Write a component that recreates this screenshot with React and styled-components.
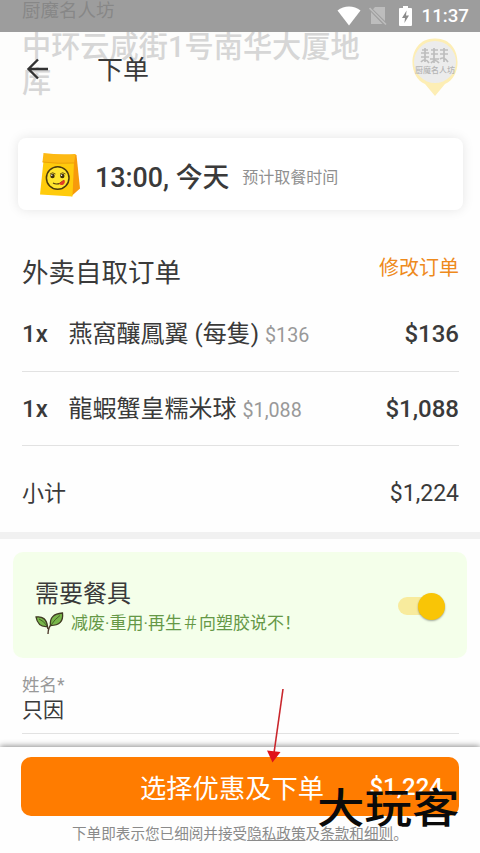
import React from 'react';

import styled, { createGlobalStyle } from 'styled-components';

const items = [
  { id: 1, count: 1, name: '燕窩釀鳳翼 (每隻)', unit: '$136', total: '$136' },
  { id: 2, count: 1, name: '龍蝦蟹皇糯米球', unit: '$1,088', total: '$1,088' },
];

const WifiIcon = () => (
  <svg width="24" height="20" viewBox="0 0 24 20">
    <path d="M0.5 4.5C7-1 17-1 23.5 4.5L12 19.5Z" fill="#fff" />
  </svg>
);

const NoSimIcon = () => (
  <svg width="18" height="20" viewBox="0 0 18 20">
    <path d="M6 1H16V15L4 3.2ZM2 6L13.5 18H2Z" fill="#bdbdbd" />
    <path d="M0.5 2L17 18.5" stroke="#bdbdbd" strokeWidth="1.6" />
  </svg>
);

const BatteryIcon = () => (
  <svg width="13" height="20" viewBox="0 0 13 20">
    <path d="M4 0H9V2H12Q13 2 13 3V19Q13 20 12 20H1Q0 20 0 19V3Q0 2 1 2H4Z" fill="#fff" />
    <path d="M7.6 4.5L3 12H6L5.4 17L10 9.5H7Z" fill="#8c8c8c" />
  </svg>
);

const BackIcon = () => (
  <svg width="24" height="22" viewBox="0 0 24 22">
    <path
      d="M12 1.5L2.5 11L12 20.5M2.5 11H22"
      fill="none"
      stroke="#333"
      strokeWidth="2.4"
    />
  </svg>
);

const BagIcon = () => (
  <svg width="40" height="45" viewBox="0 0 40 45">
    <path d="M34 2L36.5 3L40 36.5L31 44.5L30 9Z" fill="#f79a0c" />
    <path d="M3.5 9L34 10L32.5 44.5L0 42.5Z" fill="#ffcb0c" />
    <path d="M3.5 1Q18 3 35.5 2L34 11Q18 12 2.5 10Z" fill="#fdb913" />
    <path d="M2.5 10Q18 12 34 11" fill="none" stroke="#e79a05" strokeWidth="0.8" />
    <circle cx="17.7" cy="26" r="11.3" fill="#ffe52e" stroke="#4b3a0c" strokeWidth="1.5" />
    <path
      d="M10 22Q12.5 19.5 15.5 22M20 22Q22.5 19.5 25.5 22"
      fill="none"
      stroke="#4b3a0c"
      strokeWidth="0.8"
    />
    <circle cx="12.5" cy="24" r="2.2" fill="#3c2d0d" />
    <circle cx="22.3" cy="24" r="2.2" fill="#3c2d0d" />
    <circle cx="11.8" cy="23.3" r="0.7" fill="#fff" />
    <circle cx="21.6" cy="23.3" r="0.7" fill="#fff" />
    <path d="M13 31Q18 34 24 28.5" fill="none" stroke="#4b3a0c" strokeWidth="1.1" />
    <path d="M19 31.5L24 27.8Q26 30 23.5 32.5Q21 34 19 31.5Z" fill="#e23b26" />
  </svg>
);

const SproutIcon = () => (
  <svg width="29" height="23" viewBox="0 0 29 23">
    <path d="M13 22Q13 15 18 10M13 17Q12 12 7 8" fill="none" stroke="#4d3a2c" strokeWidth="1.4" />
    <path d="M1 5Q11 3.5 12.5 14.5Q3 15.5 1 5Z" fill="#78b64a" stroke="#3f3a22" strokeWidth="1.3" />
    <path d="M27.5 1Q29 13.5 15.5 13.5Q14 2 27.5 1Z" fill="#78b64a" stroke="#3f3a22" strokeWidth="1.3" />
    <path d="M4 7Q9 9 12 14M25 3.5Q20 7 16 13" fill="none" stroke="#3f5a22" strokeWidth="0.9" />
  </svg>
);

const PinIcon = () => (
  <svg width="50" height="60" viewBox="0 0 50 60">
    <path d="M25 58L15 46C-4 38-2 0 25 0.5C52 0 54 38 35 46Z" fill="#fdeeb5" />
    <circle cx="25" cy="24" r="21" fill="#ececec" />
    <path
      d="M12 12H18M11 15H19M15 10V24M11 19H19M21 12H28M21 16H28M24 10V25M30 12H38M30 16H38M34 10V24M11 24Q15 19 19 25M20 21H29M21 25Q25 20 29 25M30 21Q34 18 38 24"
      fill="none"
      stroke="#bdbdbd"
      strokeWidth="1.7"
    />
  </svg>
);

const ArrowIcon = () => (
  <svg width="20" height="76" viewBox="0 0 20 76">
    <path d="M17 1L8 65" stroke="#c9262c" strokeWidth="1.6" />
    <path d="M1 62.5L14.5 64L6.5 74.5Z" fill="#e0141b" />
  </svg>
);

const App = () => (
  <>
    <GlobalStyle />
    <Screen>
      <Restaurant>
        <div>
          <RestaurantName>厨魔名人坊</RestaurantName>
          <Address>中环云咸街1号南华大厦地库</Address>
        </div>
        <Pin>
          <PinIcon />
          <PinLabel>厨魔名人坊</PinLabel>
        </Pin>
      </Restaurant>

      <Header>
        <StatusBar>
          <WifiIcon />
          <NoSimIcon />
          <BatteryIcon />
          <Clock>11:37</Clock>
        </StatusBar>
        <TitleBar>
          <BackIcon />
          <Title>下单</Title>
        </TitleBar>
      </Header>

      <PickupCard>
        <BagIcon />
        <PickupTime>13:00, 今天</PickupTime>
        <PickupHint>预计取餐时间</PickupHint>
      </PickupCard>

      <Order>
        <OrderHeader>
          <OrderTitle>外卖自取订单</OrderTitle>
          <EditLink>修改订单</EditLink>
        </OrderHeader>
        {items.map(item => (
          <Item key={item.id}>
            <Count>{item.count}x</Count>
            <Name>{item.name}</Name>
            <UnitPrice>{item.unit}</UnitPrice>
            <Price>{item.total}</Price>
          </Item>
        ))}
        <Subtotal>
          <span>小计</span>
          <SubtotalPrice>$1,224</SubtotalPrice>
        </Subtotal>
      </Order>

      <Cutlery>
        <div>
          <CutleryTitle>需要餐具</CutleryTitle>
          <CutleryNote>
            <SproutIcon />
            <span>减废·重用·再生＃向塑胶说不！</span>
          </CutleryNote>
        </div>
        <Toggle>
          <Thumb />
        </Toggle>
      </Cutlery>

      <Field>
        <Label>姓名*</Label>
        <Value>只因</Value>
      </Field>

      <Footer>
        <SubmitButton>
          <span>选择优惠及下单</span>
          <SubmitPrice>$1,224</SubmitPrice>
        </SubmitButton>
        <Terms>
          下单即表示您已细阅并接受<u>隐私政策</u>及<u>条款和细则</u>。
        </Terms>
        <Pointer>
          <ArrowIcon />
        </Pointer>
        <Watermark>大玩客</Watermark>
      </Footer>
    </Screen>
  </>
);

export default App;

const GlobalStyle = createGlobalStyle`
  * {
    box-sizing: border-box;
  }

  body {
    margin: 0;
    background: #fefefe;
    color: #3a3a3a;
    font-family: Roboto, 'Noto Sans CJK SC', sans-serif;
  }

  svg {
    display: block;
    flex: none;
  }
`;

const Screen = styled.div`
  position: relative;
  display: flex;
  flex-direction: column;
  width: 480px;
  height: 853px;
  overflow: hidden;
  white-space: nowrap;
`;

const Restaurant = styled.div`
  display: flex;
  justify-content: space-between;
  flex: none;
  height: 120px;
  padding: 0 20px 0 22px;
  background: #fdfdfc;
`;

const RestaurantName = styled.div`
  height: 30px;
  font-size: 18.5px;
  line-height: 23px;
  color: #4a4a4a;
`;

const Address = styled.div`
  width: 345px;
  font-size: 29.2px;
  font-weight: 500;
  line-height: 35px;
  color: #d6d6d6;
  white-space: normal;
`;

const Pin = styled.div`
  position: relative;
  padding-top: 38px;
`;

const PinLabel = styled.div`
  position: absolute;
  top: 66px;
  left: 5px;
  width: 40px;
  font-size: 8px;
  font-weight: 500;
  line-height: 10px;
  text-align: center;
  color: #b5b5b5;
`;

const Header = styled.header`
  position: absolute;
  top: 0;
  left: 0;
  width: 100%;
`;

const StatusBar = styled.div`
  display: flex;
  align-items: center;
  justify-content: flex-end;
  height: 32px;
  padding-right: 11px;
  background: rgba(144, 143, 143, 0.88);

  svg + svg {
    margin-left: 8px;
  }

  svg:nth-child(3) {
    margin-left: 12px;
  }
`;

const Clock = styled.span`
  margin-left: 10px;
  font-size: 18.7px;
  font-weight: 500;
  color: #fff;
`;

const TitleBar = styled.div`
  display: flex;
  align-items: center;
  height: 74px;
  padding-left: 26px;
`;

const Title = styled.h1`
  margin: 2px 0 0 47px;
  font-size: 26px;
  font-weight: 400;
  line-height: 36px;
`;

const PickupCard = styled.section`
  display: flex;
  align-items: center;
  flex: none;
  height: 72px;
  margin: 18px 17px 0 18px;
  padding-left: 22px;
  border-radius: 8px;
  background: #fff;
  box-shadow: 0 0 12px rgba(0, 0, 0, 0.1);
`;

const PickupTime = styled.strong`
  margin: 2px 13px 0 15px;
  font-size: 26.8px;
  font-weight: 500;
`;

const PickupHint = styled.span`
  margin-top: 3px;
  font-size: 16px;
  color: #8f8f8f;
`;

const Order = styled.section`
  flex: none;
  height: 329px;
  padding: 36px 21px 0 22px;
  border-bottom: 7px solid #f1f1f1;
`;

const OrderHeader = styled.div`
  display: flex;
  justify-content: space-between;
  height: 51px;
`;

const OrderTitle = styled.h2`
  margin: 0;
  font-size: 26.5px;
  font-weight: 400;
  line-height: 54px;
`;

const EditLink = styled.a`
  font-size: 20px;
  line-height: 44px;
  color: #ee8a1c;
`;

const Item = styled.div`
  display: flex;
  align-items: baseline;
  height: 74.5px;
  border-bottom: 1px solid #e2e2e2;
  font-size: 24px;
  line-height: 75px;
`;

const Count = styled.span`
  width: 46.5px;
  font-weight: 500;
`;

const Name = styled.span`
  margin-right: 6px;
`;

const UnitPrice = styled.span`
  font-size: 19.7px;
  color: #999;
`;

const Price = styled.span`
  margin-left: auto;
  font-weight: 500;
`;

const Subtotal = styled.div`
  display: flex;
  justify-content: space-between;
  font-size: 22px;
  line-height: 95px;
`;

const SubtotalPrice = styled.span`
  font-size: 23px;
`;

const Cutlery = styled.section`
  display: flex;
  justify-content: space-between;
  flex: none;
  height: 106px;
  margin: 13px 13px 0;
  padding: 26px 22px 0;
  border-radius: 10px;
  background: #f4ffea;
`;

const CutleryTitle = styled.div`
  font-size: 24px;
  line-height: 33px;
`;

const CutleryNote = styled.div`
  display: flex;
  align-items: center;
  gap: 7px;
  font-size: 17px;
  line-height: 24px;
  color: #659846;
`;

const Toggle = styled.div`
  display: flex;
  align-items: center;
  justify-content: flex-end;
  width: 47px;
  height: 18px;
  margin-top: 19px;
  border-radius: 9px;
  background: linear-gradient(90deg, #f8eb9d 40px, transparent 40px);
`;

const Thumb = styled.div`
  width: 27px;
  height: 27px;
  border-radius: 50%;
  background: #f9c506;
  box-shadow: 0 1px 2px rgba(0, 0, 0, 0.35);
`;

const Field = styled.div`
  flex: none;
  height: 76px;
  margin: 0 21px 0 22px;
  padding-top: 14px;
  border-bottom: 1px solid #e2e2e2;
`;

const Label = styled.div`
  font-size: 17.5px;
  line-height: 26px;
  color: #999;
`;

const Value = styled.div`
  font-size: 21px;
  line-height: 25px;
`;

const Footer = styled.footer`
  position: relative;
  flex: 1;
  margin-top: 13px;
  padding: 10px 21px 0;
  background: #fefefe;
  box-shadow: 0 -1px 6px rgba(0, 0, 0, 0.45);
`;

const SubmitButton = styled.button`
  display: flex;
  align-items: center;
  justify-content: space-between;
  width: 100%;
  height: 59px;
  padding: 0 16px 0 119px;
  border: 0;
  border-radius: 10px;
  background: #ff7c00;
  color: #fff;
  font-family: inherit;
  font-size: 26.3px;
`;

const SubmitPrice = styled.span`
  font-size: 24px;
  font-weight: 500;
`;

const Terms = styled.p`
  margin: 6px 0 0 51px;
  font-size: 14.6px;
  line-height: 24px;
  color: #8a8a8a;
`;

const Pointer = styled.div`
  position: absolute;
  top: -59px;
  left: 266px;
`;

const Watermark = styled.div`
  position: absolute;
  top: 38px;
  left: 317px;
  font-size: 47.5px;
  font-weight: 500;
  line-height: 48px;
  color: #0a0a0a;
  transform: scaleY(0.86);
`;
